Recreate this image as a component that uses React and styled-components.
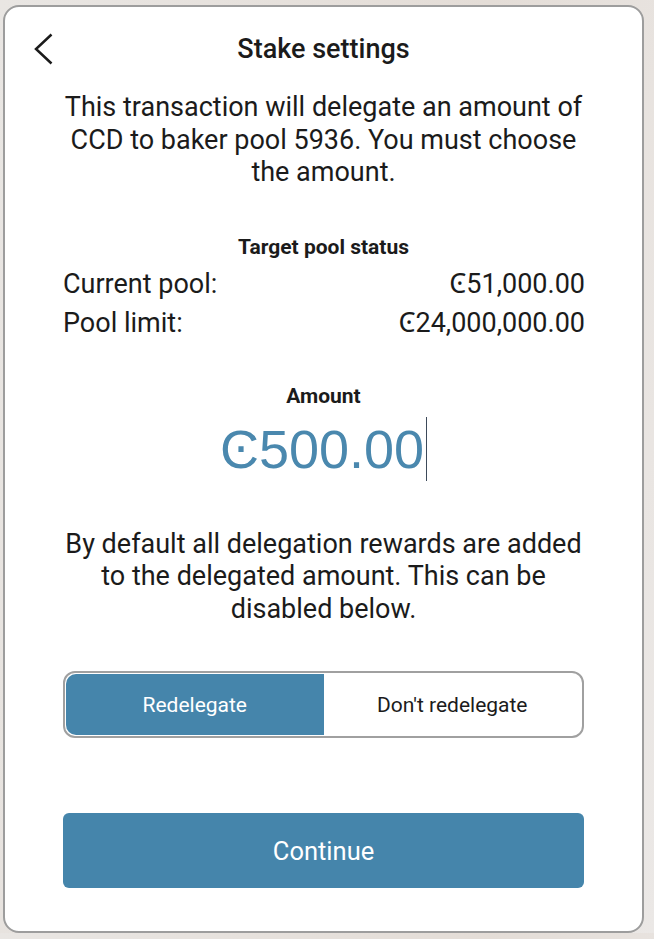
import React from 'react'
import styled, { createGlobalStyle } from 'styled-components'

const GlobalStyle = createGlobalStyle`
  html, body {
    margin: 0;
    padding: 0;
  }
  body {
    background: linear-gradient(100deg, #e9e6e3 0%, #e4ddd7 60%, #ebe8e6 100%);
    font-family: Roboto, "Noto Sans", sans-serif;
    color: #1b1b1b;
  }
`

const Card = styled.div`
  box-sizing: border-box;
  width: 641px;
  height: 928px;
  margin: 5px 0 0 3px;
  background: #fff;
  border: 2px solid #9d9d9d;
  border-radius: 16px;
  display: flex;
  flex-direction: column;
  align-items: center;
  padding: 0 58px;
`

const Header = styled.div`
  position: relative;
  align-self: stretch;
  margin-top: 28px;
  height: 28px;
  display: flex;
  justify-content: center;
`

const BackButton = styled.button`
  position: absolute;
  left: -30px;
  top: -2px;
  width: 20px;
  height: 32px;
  padding: 0;
  border: none;
  background: none;
  cursor: pointer;
  display: flex;
`

const Title = styled.h1`
  margin: 0;
  font-size: 27px;
  line-height: 28px;
  font-weight: 500;
`

const Text = styled.p`
  margin: ${(p) => p.$mt}px -4px 0;
  font-size: 27px;
  line-height: 32.5px;
  text-align: center;
`

const Label = styled.div`
  margin-top: ${(p) => p.$mt}px;
  font-size: 21px;
  line-height: 20px;
  font-weight: 700;
`

const StatusList = styled.div`
  align-self: stretch;
  margin-top: 8px;
  display: flex;
  flex-direction: column;
`

const StatusRow = styled.div`
  display: flex;
  justify-content: space-between;
  font-size: 27px;
  line-height: 39px;
`

const Value = styled.span`
  margin-right: -1px;
`

const Amount = styled.div`
  margin-top: 11px;
  height: 64px;
  display: flex;
  align-items: center;
  font-family: "Liberation Sans", Arial, sans-serif;
  font-size: 54px;
  color: #4a88ae;
`

const Caret = styled.span`
  width: 1px;
  height: 64px;
  margin-left: 2px;
  background: #3d4a5a;
`

const Toggle = styled.div`
  box-sizing: border-box;
  align-self: stretch;
  margin-top: 46px;
  height: 67px;
  border: 2px solid #a0a0a0;
  border-radius: 12px;
  padding: 1px;
  display: grid;
  grid-template-columns: 1fr 1fr;
`

const Option = styled.button`
  border: none;
  font-family: Roboto, sans-serif;
  font-size: 21px;
  cursor: pointer;
  border-radius: ${(p) => (p.$left ? '10px 0 0 10px' : '0 10px 10px 0')};
  background: ${(p) => (p.$active ? '#4585ab' : '#fff')};
  color: ${(p) => (p.$active ? '#fff' : '#1b1b1b')};
`

const ContinueButton = styled.button`
  align-self: stretch;
  margin-top: 75px;
  height: 75px;
  border: none;
  border-radius: 6px;
  background: #4585ab;
  color: #fff;
  font-family: Roboto, sans-serif;
  font-size: 25.5px;
  cursor: pointer;
`

const Chevron = () => (
  <svg width="20" height="32" viewBox="0 0 20 32" fill="none">
    <polyline points="18.5,1.5 3,16 18.5,30.5" stroke="#1b1b1b" strokeWidth="2.5" strokeLinejoin="miter" />
  </svg>
)

export default function App() {
  return (
    <>
      <GlobalStyle />
      <Card>
        <Header>
          <BackButton aria-label="Back">
            <Chevron />
          </BackButton>
          <Title>Stake settings</Title>
        </Header>
        <Text $mt={28}>
          This transaction will delegate an amount of CCD to baker pool 5936. You must choose the amount.
        </Text>
        <Label $mt={48}>Target pool status</Label>
        <StatusList>
          <StatusRow>
            <span>Current pool:</span>
            <Value>Ͼ51,000.00</Value>
          </StatusRow>
          <StatusRow>
            <span>Pool limit:</span>
            <Value>Ͼ24,000,000.00</Value>
          </StatusRow>
        </StatusList>
        <Label $mt={43}>Amount</Label>
        <Amount>
          Ͼ500.00
          <Caret />
        </Amount>
        <Text $mt={47}>
          By default all delegation rewards are added to the delegated amount. This can be disabled below.
        </Text>
        <Toggle>
          <Option $left $active>Redelegate</Option>
          <Option>Don't redelegate</Option>
        </Toggle>
        <ContinueButton>Continue</ContinueButton>
      </Card>
    </>
  )
}
